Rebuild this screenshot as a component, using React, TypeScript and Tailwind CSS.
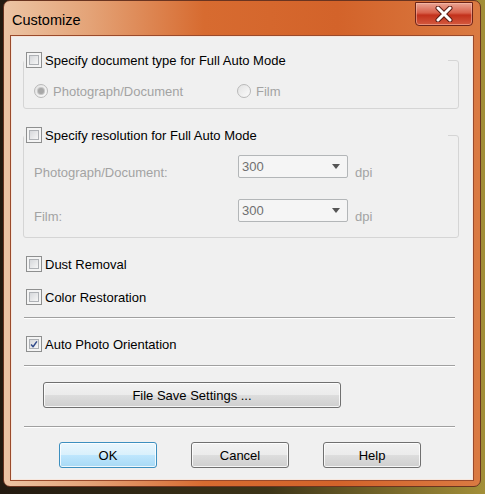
import React from 'react'

const font = { fontFamily: '"Liberation Sans", Arial, sans-serif' }

function CheckBox({ checked = false }: { checked?: boolean }) {
  return (
    <div className="w-[16px] h-[16px] shrink-0 border border-[#8e8f8f] bg-[#f4f4f4] p-[2px]">
      <div className="w-full h-full border border-[#aeb1b5] bg-[linear-gradient(135deg,#d6d8db,#f6f6f6)] flex items-center justify-center">
        {checked ? (
          <svg width="11" height="11" viewBox="0 0 11 11">
            <path d="M1.5 5.5 L4.2 8.6 L9.5 1.2" fill="none" stroke="#304a8a" strokeWidth="2" strokeLinejoin="round" />
          </svg>
        ) : null}
      </div>
    </div>
  )
}

function Radio({ selected = false }: { selected?: boolean }) {
  return (
    <div className="w-[14px] h-[14px] shrink-0 rounded-full border border-[#b9b9b9] bg-[linear-gradient(135deg,#e2e2e2,#fbfbfb)] flex items-center justify-center">
      {selected ? <div className="w-[6px] h-[6px] rounded-full bg-[#a8a8a8] shadow-[0_0_0_1px_#c8c8c8]" /> : null}
    </div>
  )
}

function Separator() {
  return <div className="ml-[12px] w-[431px] h-[2px] border-t border-b border-t-[#a0a0a0] border-b-white" />
}

function Combo() {
  return (
    <div className="w-[110px] h-[23px] rounded-[2px] border border-[#b3b6b8] bg-[#f5f5f5] flex items-center justify-between pl-[3px] pr-[7px]">
      <span className="text-[#707070] text-[13px] leading-[15px]">300</span>
      <svg width="8" height="5" viewBox="0 0 8 5">
        <path d="M0 0 H8 L4 5 Z" fill="#555" />
      </svg>
    </div>
  )
}

function Button({ label, primary = false, width }: { label: string; primary?: boolean; width: string }) {
  return (
    <div
      className={`${width} h-[26px] rounded-[3px] border flex items-center justify-center text-[13px] text-black shadow-[inset_0_0_0_1px_rgba(255,255,255,0.8)] ${
        primary
          ? 'border-[#3c8fbf] bg-[linear-gradient(to_bottom,#eaf6fd_0%,#d9f0fc_50%,#bee6fd_51%,#a7d9f5_100%)] shadow-[0_0_2px_#6fc6ec]'
          : 'border-[#707070] bg-[linear-gradient(to_bottom,#f2f2f2_0%,#ebebeb_50%,#dddddd_51%,#cfcfcf_100%)]'
      }`}
    >
      {label}
    </div>
  )
}

export default function App() {
  return (
    <div
      className="w-[485px] h-[494px] pl-[3px] bg-[linear-gradient(to_right,#231a10,#3c3418_55%,#a38f38)]"
      style={font}
    >
      <div className="relative w-[478px] h-[487px] rounded-[7px] border border-[#6a3420] bg-[linear-gradient(to_right,#ecc4a4_0%,#e4a377_18%,#d76b30_42%,#d3632a_70%,#da7a42_100%)] flex flex-col">
        <div className="h-[35px] flex items-start justify-between">
          <span className="ml-[8px] mt-[11px] text-[14.5px] leading-[17px] text-black">Customize</span>
          <div className="mt-[1px] mr-[7px] w-[58px] h-[24px] rounded-b-[4px] border border-[#6d2419] bg-[linear-gradient(to_bottom,#eaa594_0%,#d8604a_45%,#c2311c_55%,#d45a3e_100%)] shadow-[inset_0_0_0_1px_rgba(255,200,180,0.5)] flex items-center justify-center">
            <svg width="20" height="16" viewBox="0 0 20 16">
              <path d="M4 2 L16 14 M16 2 L4 14" stroke="#5a1c14" strokeWidth="5" strokeLinecap="round" />
              <path d="M4 2 L16 14 M16 2 L4 14" stroke="#ffffff" strokeWidth="3" strokeLinecap="round" />
            </svg>
          </div>
        </div>

        <div className="ml-[7px] w-[462px] h-[444px] bg-[#f0f0f0] border border-[#f6e6dc] shadow-[0_0_0_1px_#9a4a2c] flex flex-col text-[13px] leading-[15px] pt-[15px]">
          <fieldset className="ml-[11px] w-[436px] border border-[#d5d5d5] rounded-[3px] p-0 m-0">
            <legend className="w-[424px] bg-[#f0f0f0] p-0">
              <div className="ml-[2px] flex items-center gap-[3px] h-[16px]">
                <CheckBox />
                <span className="text-black">Specify document type for Full Auto Mode</span>
              </div>
            </legend>
            <div className="pt-[16px] pb-[10px] pl-[10px] flex items-center h-[40px] text-[#a3a3a3]">
              <div className="w-[203px] flex items-center gap-[5px]">
                <Radio selected />
                <span>Photograph/Document</span>
              </div>
              <div className="flex items-center gap-[5px]">
                <Radio />
                <span>Film</span>
              </div>
            </div>
          </fieldset>

          <fieldset className="mt-[18px] ml-[11px] w-[436px] border border-[#d5d5d5] rounded-[3px] p-0 m-0">
            <legend className="w-[424px] bg-[#f0f0f0] p-0">
              <div className="ml-[2px] flex items-center gap-[3px] h-[16px]">
                <CheckBox />
                <span className="text-black">Specify resolution for Full Auto Mode</span>
              </div>
            </legend>
            <div className="pt-[12px] pb-[13px] pl-[10px] flex flex-col gap-[19px] text-[#a3a3a3]">
              <div className="flex items-start">
                <span className="w-[204px] mt-[10px]">Photograph/Document:</span>
                <Combo />
                <span className="ml-[7px] mt-[10px]">dpi</span>
              </div>
              <div className="flex items-start">
                <span className="w-[204px] mt-[10px]">Film:</span>
                <Combo />
                <span className="ml-[7px] mt-[10px]">dpi</span>
              </div>
            </div>
          </fieldset>

          <div className="mt-[18px] ml-[14px] flex items-center gap-[3px]">
            <CheckBox />
            <span>Dust Removal</span>
          </div>
          <div className="mt-[17px] ml-[14px] flex items-center gap-[3px]">
            <CheckBox />
            <span>Color Restoration</span>
          </div>
          <div className="mt-[12px]">
            <Separator />
          </div>
          <div className="mt-[17px] ml-[14px] flex items-center gap-[3px]">
            <CheckBox checked />
            <span>Auto Photo Orientation</span>
          </div>
          <div className="mt-[13px]">
            <Separator />
          </div>
          <div className="mt-[15px] ml-[31px]">
            <Button label="File Save Settings ..." width="w-[298px]" />
          </div>
          <div className="mt-[18px]">
            <Separator />
          </div>
          <div className="mt-[14px] ml-[47px] flex gap-[34px]">
            <Button label="OK" primary width="w-[98px]" />
            <Button label="Cancel" width="w-[98px]" />
            <Button label="Help" width="w-[98px]" />
          </div>
        </div>
      </div>
    </div>
  )
}
